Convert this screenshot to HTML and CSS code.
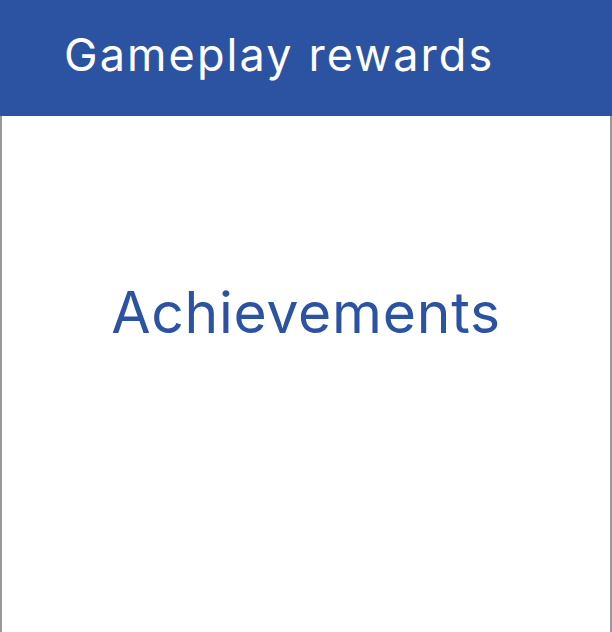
FILE: index.html
```html
<!DOCTYPE html>
<html>
<head>
<meta charset="utf-8">
<link rel="stylesheet" href="styles.css">
</head>
<body>
<div class="page">
  <header class="bar"><h1 class="title">Gameplay rewards</h1></header>
  <main class="card"><div class="label">Achievements</div></main>
</div>
</body>
</html>
```
FILE: styles.css
```css
html, body { margin: 0; padding: 0; background: #fff; }
.page { width: 612px; height: 632px; display: flex; flex-direction: column; overflow: hidden; font-family: Inter, "Liberation Sans", sans-serif; }
.bar { height: 116px; background: #2c53a2; display: flex; align-items: center; padding-left: 64px; padding-bottom: 8px; box-sizing: border-box; flex: none; }
.title { margin: 0; color: #fff; font-weight: 400; font-size: 45px; letter-spacing: 2.1px; line-height: 1; }
.card { flex: 1; border-left: 2px solid #999; border-right: 2px solid #999; display: flex; justify-content: center; padding-top: 168px; box-sizing: border-box; }
.label { color: #2c53a2; font-size: 57px; letter-spacing: 0.75px; line-height: 1; height: 60px; }
```
